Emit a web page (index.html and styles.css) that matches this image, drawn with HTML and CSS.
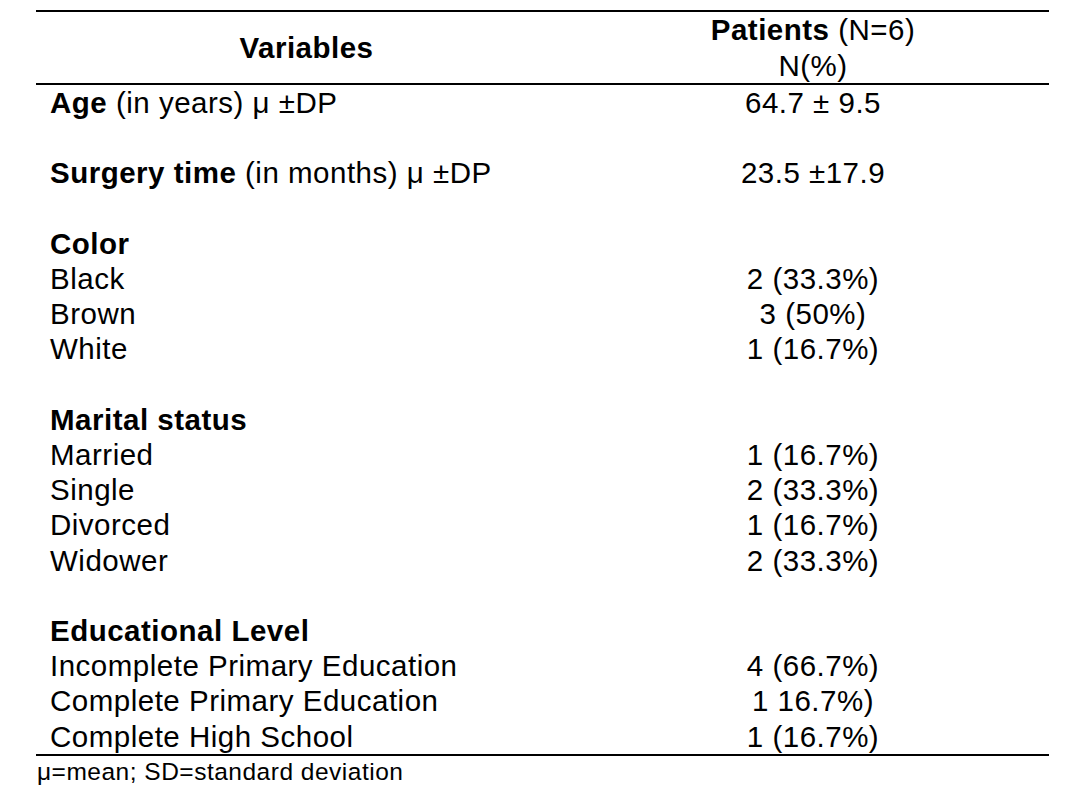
FILE: index.html
```html
<!DOCTYPE html>
<html lang="en">
<head>
<meta charset="utf-8">
<title>Patients characteristics</title>
<link rel="stylesheet" href="styles.css">
</head>
<body>
<div class="wrap">
  <table class="data">
    <thead>
      <tr>
        <th class="var-head">Variables</th>
        <th class="pat-head"><span class="b">Patients</span> (N=6)<br>N(%)</th>
      </tr>
    </thead>
    <tbody>
      <tr><td class="lbl"><span class="b">Age</span> (in years) μ ±DP</td><td class="val">64.7 ± 9.5</td></tr>
      <tr class="blank"><td>&nbsp;</td><td></td></tr>
      <tr><td class="lbl"><span class="b">Surgery time</span> (in months) μ ±DP</td><td class="val">23.5 ±17.9</td></tr>
      <tr class="blank"><td>&nbsp;</td><td></td></tr>
      <tr><td class="lbl b">Color</td><td class="val"></td></tr>
      <tr><td class="lbl">Black</td><td class="val">2 (33.3%)</td></tr>
      <tr><td class="lbl">Brown</td><td class="val">3 (50%)</td></tr>
      <tr><td class="lbl">White</td><td class="val">1 (16.7%)</td></tr>
      <tr class="blank"><td>&nbsp;</td><td></td></tr>
      <tr><td class="lbl b">Marital status</td><td class="val"></td></tr>
      <tr><td class="lbl">Married</td><td class="val">1 (16.7%)</td></tr>
      <tr><td class="lbl">Single</td><td class="val">2 (33.3%)</td></tr>
      <tr><td class="lbl">Divorced</td><td class="val">1 (16.7%)</td></tr>
      <tr><td class="lbl">Widower</td><td class="val">2 (33.3%)</td></tr>
      <tr class="blank"><td>&nbsp;</td><td></td></tr>
      <tr><td class="lbl b">Educational Level</td><td class="val"></td></tr>
      <tr><td class="lbl">Incomplete Primary Education</td><td class="val">4 (66.7%)</td></tr>
      <tr><td class="lbl">Complete Primary Education</td><td class="val">1 16.7%)</td></tr>
      <tr class="last"><td class="lbl">Complete High School</td><td class="val">1 (16.7%)</td></tr>
    </tbody>
  </table>
  <p class="note">μ=mean; SD=standard deviation</p>
</div>
</body>
</html>
```

FILE: styles.css
```css
html, body {
  margin: 0;
  padding: 0;
  background: #ffffff;
}

body {
  font-family: "Liberation Sans", Arial, sans-serif;
  color: #000000;
}

.wrap {
  margin: 10px 0 0 36px;
  width: 1013px;
}

.data {
  width: 1013px;
  border-collapse: collapse;
  table-layout: fixed;
  font-size: 29.5px;
  letter-spacing: 0.5px;
  line-height: 35.2px;
}

.data th,
.data td {
  padding: 0;
  font-weight: normal;
  white-space: nowrap;
}

.data thead tr {
  border-top: 2px solid #000;
  border-bottom: 2px solid #000;
}

.data .var-head {
  width: 541px;
  text-align: center;
  vertical-align: middle;
  font-weight: bold;
}

.pat-head {
  text-align: center;
  vertical-align: middle;
}

.data thead th {
  line-height: 35.5px;
}

.data .b {
  font-weight: bold;
}

.data .lbl {
  text-align: left;
  padding-left: 14px;
}

.val {
  text-align: center;
}

.data tbody tr.last {
  border-bottom: 2px solid #000;
}

.note {
  margin: 0;
  padding-left: 1px;
  font-size: 24.5px;
  letter-spacing: 0.5px;
  line-height: 31px;
}
```
